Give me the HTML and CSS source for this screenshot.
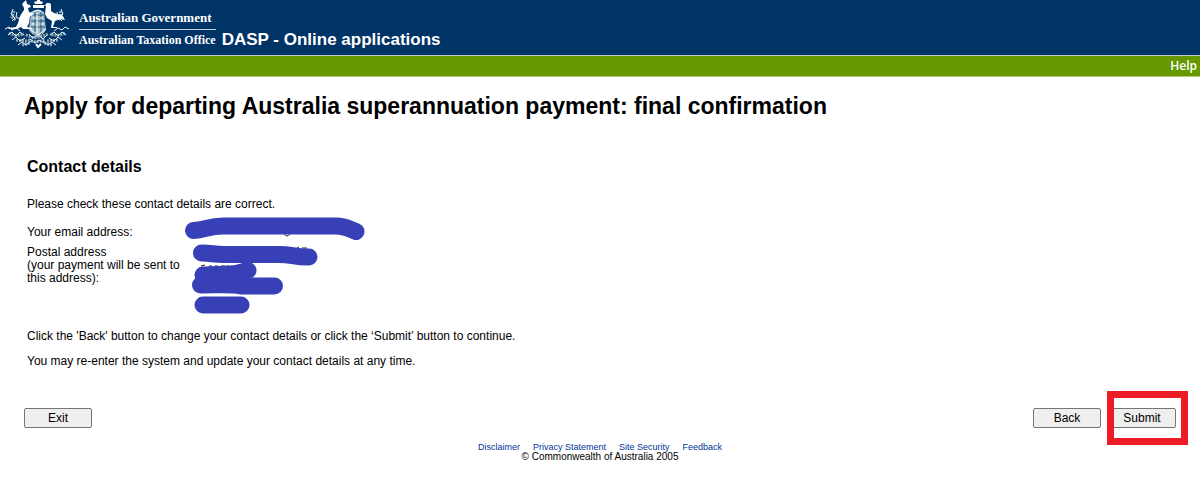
FILE: index.html
```html
<!DOCTYPE html>
<html lang="en">
<head>
<meta charset="utf-8">
<title>DASP - Online applications</title>
<link rel="stylesheet" href="styles.css">
</head>
<body>
<header class="banner">
  <svg class="crest" viewBox="0 0 66 50" aria-hidden="true">
    <g fill="none" stroke="#8aa9b8" stroke-width="3" stroke-dasharray="2 1">
      <path d="M10 11l-2 6l4 3M5 33q7 4 15 1M12 40l11 1M18 45l8-2"/>
      <path d="M56 11l2 6l-4 3M61 33q-7 4-15 1M54 40l-11 1M48 45l-8-2"/>
      <path d="M22 35l8 3l6-1l8-3M24 40l8 2l9-2"/>
    </g>
    <g fill="none" stroke="#eef4f6" stroke-width="1">
      <path d="M9 9l-2 5l4 4l-3 3M13 12l-1 5l4 2M1 29l4-2l3 3l4-2l4 3M4 35l4-3l4 4l4-4l4 3M8 40l4-3l4 4l5-3M14 45l4-3l4 3l5-4"/>
      <path d="M57 9l2 5l-4 4l3 3M53 12l1 5M65 29l-4-2l-3 3l-4-2l-4 3M62 35l-4-3l-4 4l-4-4l-4 3M58 40l-4-3l-4 4l-5-3M52 45l-4-3l-4 3l-5-4"/>
      <path d="M25 34l4 4l5-3l5 4l4-4M26 39l5 4l4-3l5 3"/>
    </g>
    <path fill="#a5bfca" d="M27 12q6-4 13 0l2 18q-3 5-8 7q-6-2-9-7z"/>
    <path fill="none" stroke="#24557b" d="M28 15h12M27 21h14M27 27h14M31 12v23M37 12v23"/>
    <path fill="none" stroke="#f4f8f9" d="M29 12q5-4 9 0M29 18h3M36 18h3M33 13v20M28 24h3M37 24h3M26 29l8 6l8-6"/>
    <path fill="#fff" d="M33 0h3v1l3 1l-1 2h-7l-1-2l3-1zM29 5h11v3H29z"/>
    <path fill="none" stroke="#fff" stroke-width="2" d="M32 44l2 3l3-3"/>
    <path fill="#fff" d="M18 4l2-2l2-2l1 4l3 1l1 2l-3 1l1 4l4 1v2l-3 1l-1 7l-2 4l5 1v1h-9l-2-2l-4 2h-8l-1-1l8-1l2-4l2-7l4-6V8z"/>
    <path fill="#fff" d="M40 6l3-3h3l1 2v6l3 2l8 2l3 5l-5-1l-5 2l-2 6h4v1h-6l1-7l-5-3l-2-4l1-8z"/>
  </svg>
  <div class="agency">
    <div class="government">Australian Government</div>
    <div class="office">Australian Taxation Office</div>
  </div>
  <div class="product">DASP - Online applications</div>
</header>
<nav class="toolbar"><a class="help" href="#">Help</a></nav>
<main class="content">
  <h1 class="title">Apply for departing Australia superannuation payment: final confirmation</h1>
  <section class="details">
    <h2 class="subtitle">Contact details</h2>
    <p class="intro">Please check these contact details are correct.</p>
    <div class="records">
      <table class="fields">
        <tr><th scope="row">Your email address:</th><td></td></tr>
        <tr><th scope="row">Postal address<br>(your payment will be sent to<br>this address):</th><td></td></tr>
      </table>
      <svg class="redaction" viewBox="0 0 195 106" role="img" aria-label="Details hidden">
        <g fill="none" stroke="#222" stroke-width="1"><path d="M104 22q3 4 6 0M117 36l2-1M122 36h5M21 54l4-1M29 54h3M35 54h3M41 54h4M47 54h2"/></g>
        <g fill="none" stroke="#3840b8" stroke-width="17" stroke-linecap="round" stroke-linejoin="round">
          <path d="M13.500 18.500C25 18 29 14 43 14H156C165 14 169 17 176 19.500"/>
          <path d="M21.500 41C32 41 33 42.500 44 42.500H96C113 42 111 45 129 45"/>
          <path d="M23 63C38 62 49 63 58 61L68 58.500"/>
          <path d="M20.500 73C40 73 51 72 61 74H94.500"/>
          <path d="M23 93H61"/>
        </g>
      </svg>
    </div>
    <p class="note">Click the 'Back' button to change your contact details or click the ‘Submit’ button to continue.</p>
    <p class="note">You may re-enter the system and update your contact details at any time.</p>
  </section>
  <div class="actions">
    <button class="button" type="button">Exit</button>
    <div class="forward">
      <button class="button" type="button">Back</button>
      <div class="marked"><button class="button" type="submit">Submit</button></div>
    </div>
  </div>
</main>
<footer class="footer">
  <div class="links"><a href="#">Disclaimer</a><a href="#">Privacy Statement</a><a href="#">Site Security</a><a href="#">Feedback</a></div>
  <div class="copyright">© Commonwealth of Australia 2005</div>
</footer>
</body>
</html>
```
FILE: styles.css
```css
* { box-sizing: border-box; }
body {
  margin: 0;
  background: #fff;
  color: #000;
  font: 12px/13px "Liberation Sans", Arial, sans-serif;
}
a { text-decoration: none; }
.banner {
  display: flex;
  height: 56px;
  padding-left: 4px;
  background: #003366;
  border-bottom: 1px solid #c0cbd0;
  color: #fff;
}
.crest { flex: none; width: 66px; height: 50px; }
.agency {
  margin: 10px 0 0 9px;
  font-family: "Liberation Serif", "Times New Roman", serif;
  font-weight: bold;
  white-space: nowrap;
}
.government { padding-bottom: 3px; border-bottom: 1px solid #c5d2dc; font-size: 13px; line-height: 16px; }
.office { padding-top: 2px; font-size: 12px; line-height: 16px; }
.product { margin: 30px 0 0 6px; font-size: 17px; line-height: 20px; font-weight: bold; white-space: nowrap; }
.toolbar {
  display: flex;
  justify-content: flex-end;
  height: 21px;
  padding: 0 3px;
  background: #669900;
  border-bottom: 1px solid #b3cc80;
}
.help { color: #fff; font: 600 12px/20px "Open Sans", sans-serif; }
.content { padding: 0 24px; }
.title { margin: 0; padding-top: 14px; font-size: 23px; line-height: 30px; }
.details { padding: 36px 3px 0; }
.subtitle { margin: 0; font-size: 16px; line-height: 20px; }
.intro { margin: 21px 0 0; }
.records { position: relative; min-height: 107px; margin-top: 12px; }
.fields { border-collapse: collapse; }
.fields th { width: 160px; padding: 3px 0 4px; font-weight: normal; text-align: left; white-space: nowrap; }
.redaction { position: absolute; left: 153px; top: -11px; width: 195px; height: 106px; }
.note { margin: 0 0 12px; }
.actions { display: flex; justify-content: space-between; padding-top: 28px; }
.forward { display: flex; gap: 7px; }
.button {
  width: 68px;
  height: 20px;
  padding: 0;
  border: 1px solid #767676;
  border-radius: 2px;
  background: #efefef;
  color: #000;
  font: 12px/16px "Liberation Sans", Arial, sans-serif;
}
.marked { position: relative; }
.marked::after {
  content: "";
  position: absolute;
  inset: -17px -12px -17px -1px;
  border: 7px solid #ed1c24;
}
.footer { padding-top: 14px; font-size: 10px; line-height: 10px; text-align: center; }
.links { display: flex; justify-content: center; gap: 13px; font-size: 9px; }
.links a { color: #003399; }
```
